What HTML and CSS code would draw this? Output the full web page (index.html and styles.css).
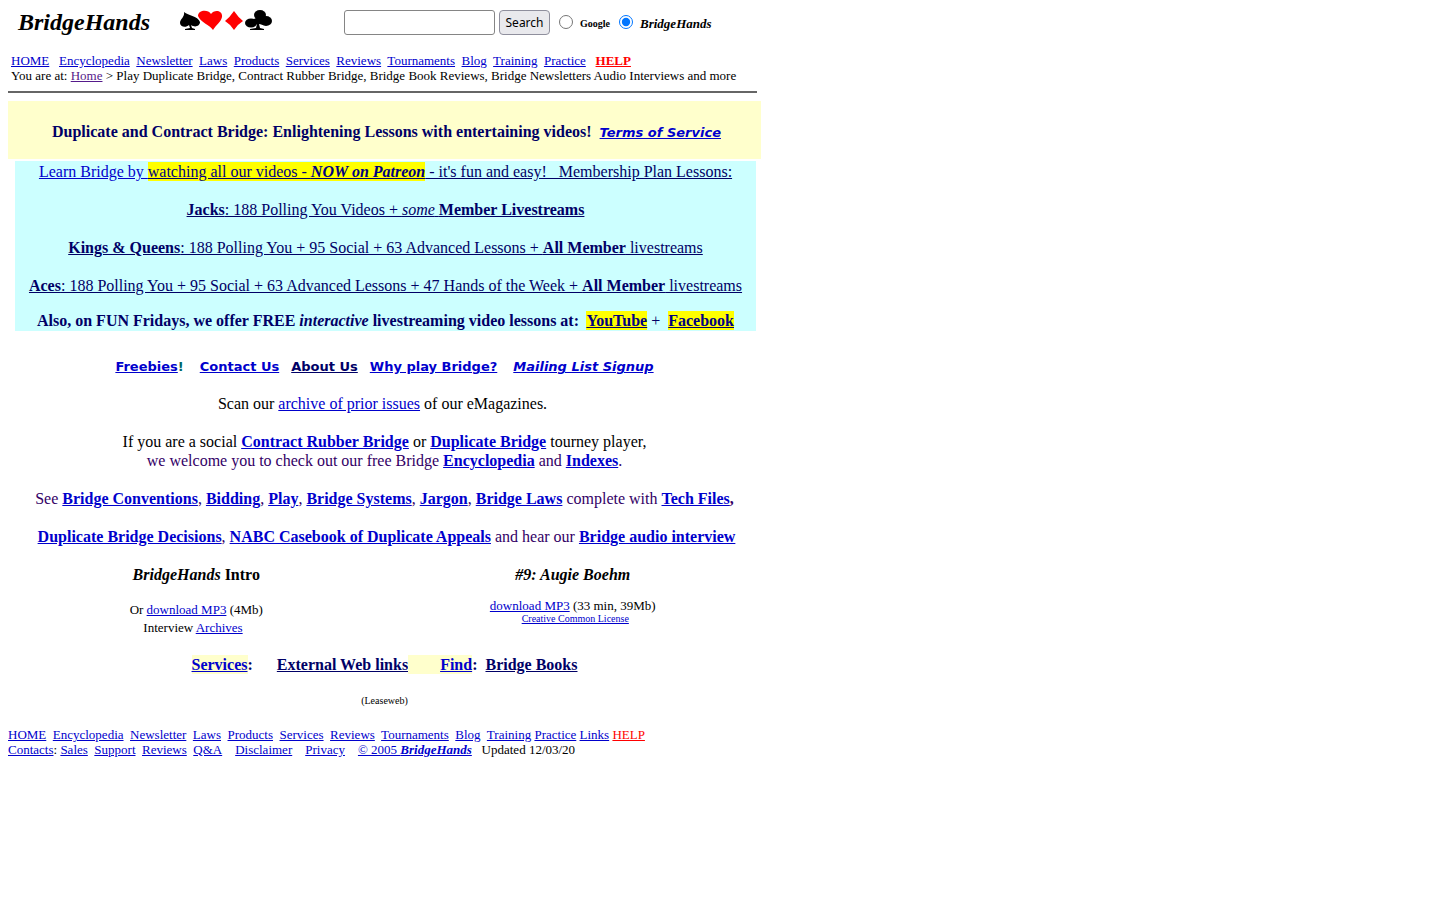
FILE: index.html
```html
<!DOCTYPE html>
<html lang="en">
<head>
	<meta charset="UTF-8">
	<title>BridgeHands</title>
	<link rel="stylesheet" href="styles.css">
</head>
<body>
	<div class="page">
		<header class="top">
			<div class="logo">BridgeHands</div>
			<svg class="suits" viewBox="0 0 92 22" role="img" aria-label="Card suits">
				<path d="M4 2C7 5 18 6 20 12C20 16 15 18 11 15L12 18L15 19V20H5V19L10 18L9 15C6 18 0 17 0 13C0 9 5 7 4 2Z"/>
				<path fill="#f00" d="M33 20C30 15 20 12 18 6C18 0 28 -1 31 4C34 -1 43 0 42 7C41 12 36 15 33 20Z"/>
				<path fill="#f00" d="M54 1Q58 7 63 11Q58 14 54 20Q50 14 45 11Q50 7 54 1Z"/>
				<ellipse cx="80" cy="5" rx="6" ry="5"/>
				<ellipse cx="71" cy="13" rx="6" ry="4.5"/>
				<ellipse cx="86" cy="11" rx="6" ry="5"/>
				<path d="M74 9L76 8L84 8V15L79 14L80 18L84 19V20H70V19L76 18L77 14L72 16Z"/>
			</svg>
			<form class="search">
				<input type="text" class="search-text" aria-label="Search text">
				<button type="button" class="search-btn">Search</button>
				<label class="google"><input type="radio" name="site">Google</label>
				<label class="site"><input type="radio" name="site" checked>BridgeHands</label>
			</form>
		</header>

		<nav class="nav">
			<a href="#">HOME</a>&nbsp;&nbsp; <a href="#">Encyclopedia</a>&nbsp; <a href="#">Newsletter</a>&nbsp; <a href="#">Laws</a>&nbsp; <a href="#">Products</a>&nbsp; <a href="#">Services</a>&nbsp; <a href="#">Reviews</a>&nbsp; <a href="#">Tournaments</a>&nbsp; <a href="#">Blog</a>&nbsp; <a href="#">Training</a>&nbsp; <a href="#">Practice</a>&nbsp;&nbsp; <a href="#" class="help"><b>HELP</b></a><br>
			You are at: <a href="#" class="visited">Home</a> &gt; Play Duplicate Bridge, Contract Rubber Bridge, Bridge Book Reviews, Bridge Newsletters Audio Interviews and more
		</nav>
		<hr>

		<h1 class="banner">&nbsp;Duplicate and Contract Bridge: Enlightening Lessons with entertaining videos!&nbsp; <a href="#" class="sans"><i>Terms of Service</i></a></h1>

		<div class="plans">
			<p><a href="#">Learn Bridge by </a><a href="#" class="navy"><mark>watching all our videos - <b><i>NOW on Patreon</i></b></mark> - it's fun and easy!&nbsp;&nbsp; Membership Plan Lessons:</a></p>
			<p><a href="#" class="navy"><b>Jacks</b>: 188 Polling You Videos + <i>some</i> <b>Member Livestreams</b></a></p>
			<p><a href="#" class="navy"><b>Kings &amp; Queens</b>: 188 Polling You + 95 Social + 63 Advanced Lessons + <b>All Member</b> livestreams</a></p>
			<p><a href="#" class="navy"><b>Aces</b>: 188 Polling You + 95 Social + 63 Advanced Lessons + 47 Hands of the Week + <b>All Member</b> livestreams</a></p>
			<p class="fridays"><b>Also, on FUN Fridays, we offer FREE <i>interactive</i> livestreaming video lessons at:&nbsp; <a href="#" class="navy"><mark>YouTube</mark></a></b> +&nbsp; <b><a href="#" class="navy"><mark>Facebook</mark></a></b></p>
		</div>

		<p class="quick"><a href="#" class="sans">Freebies</a><span class="sans teal">!</span>&nbsp;&nbsp;&nbsp; <a href="#" class="sans">Contact Us</a>&nbsp;&nbsp; <a href="#" class="sans navy">About Us</a>&nbsp;&nbsp; <a href="#" class="sans">Why play Bridge?</a>&nbsp;&nbsp;&nbsp; <a href="#" class="sans"><i>Mailing List Signup</i></a></p>

		<div class="intro">
			<p>Scan our <a href="#">archive of prior issues</a> of our eMagazines.&nbsp;</p>
			<p>If you are a social <b><a href="#">Contract Rubber Bridge</a></b> or <b><a href="#">Duplicate Bridge</a></b> tourney player,<br>
			<span class="purple">we welcome you to check out our free Bridge <b><a href="#">Encyclopedia</a></b> and <b><a href="#">Indexes</a></b>.</span></p>
			<p class="purple">See <b><a href="#">Bridge Conventions</a></b>, <b><a href="#">Bidding</a></b>, <b><a href="#">Play</a></b>, <b><a href="#">Bridge Systems</a></b>, <b><a href="#">Jargon</a></b>, <b><a href="#">Bridge Laws</a></b> complete with <b><a href="#">Tech Files</a>,</b></p>
			<p class="purple">&nbsp;<b><a href="#">Duplicate Bridge Decisions</a></b>, <b><a href="#">NABC Casebook of Duplicate Appeals</a></b> and hear our <b><a href="#">Bridge audio interview</a></b></p>
		</div>

		<div class="audio">
			<div>
				<h2><i>BridgeHands</i> Intro</h2>
				<p class="mp3">Or <a href="#">download MP3</a> (4Mb)<br>Interview <a href="#">Archives</a>&nbsp;&nbsp;</p>
			</div>
			<div>
				<h2><i>#9: Augie Boehm</i></h2>
				<p><a href="#">download MP3</a> (33 min, 39Mb)</p>
				<p class="small">&nbsp;&nbsp;<a href="#">Creative Common License</a></p>
			</div>
		</div>

		<p class="find"><a href="#" class="pale">Services</a>:&nbsp;&nbsp;&nbsp;&nbsp;&nbsp; <a href="#" class="navy">External Web links</a><span class="pale">&nbsp;&nbsp;&nbsp;&nbsp;&nbsp;&nbsp;&nbsp; <a href="#">Find</a></span>:&nbsp; <a href="#" class="navy">Bridge Books</a></p>

		<p class="host small">(Leaseweb)</p>

		<footer>
			<a href="#">HOME</a>&nbsp; <a href="#">Encyclopedia</a>&nbsp; <a href="#">Newsletter</a>&nbsp; <a href="#">Laws</a>&nbsp; <a href="#">Products</a>&nbsp; <a href="#">Services</a>&nbsp; <a href="#">Reviews</a>&nbsp; <a href="#">Tournaments</a>&nbsp; <a href="#">Blog</a>&nbsp; <a href="#">Training</a> <a href="#">Practice</a> <a href="#">Links</a> <a href="#" class="help">HELP</a><br>
			<a href="#">Contacts</a>: <a href="#">Sales</a>&nbsp; <a href="#">Support</a>&nbsp; <a href="#">Reviews</a>&nbsp; <a href="#">Q&amp;A</a>&nbsp;&nbsp;&nbsp; <a href="#">Disclaimer</a>&nbsp;&nbsp;&nbsp; <a href="#">Privacy</a>&nbsp;&nbsp;&nbsp; <a href="#">© 2005 <b><i>BridgeHands</i></b></a>&nbsp;&nbsp; Updated 12/03/20
		</footer>
	</div>
</body>
</html>
```
FILE: styles.css
```css
body{
	margin: 8px;
	background: #fff;
	color: #000;
	font-family: "Liberation Serif","Times New Roman",serif;
	font-size: 13px;
	line-height: 15px;
}
h1,h2,p{
	margin: 0;
	font-size: 16px;
	line-height: 19px;
}
a{
	color: #0000cc;
}
.page{
	max-width: 753px;
}
.sans{
	font-family: "DejaVu Sans",Verdana,sans-serif;
	font-size: 13px;
	font-weight: bold;
}
.navy{
	color: #000066;
}
.purple{
	color: #330066;
}
.teal{
	color: #006666;
}
.help{
	color: #ff0000;
}
.visited{
	color: #551a8b;
}
.pale{
	padding: 1px 0;
	background: #ffffcc;
}
mark{
	padding: 1px 0;
	background: #ffff00;
	color: #000080;
}

/* header */
.top{
	display: flex;
	align-items: center;
	height: 28px;
	padding-left: 10px;
}
.logo{
	font-size: 24px;
	font-weight: bold;
	font-style: italic;
	line-height: 28px;
}
.suits{
	width: 92px;
	height: 22px;
	margin: 0 72px 2px 30px;
}
.search{
	display: flex;
	align-items: center;
}
.search-text{
	box-sizing: border-box;
	width: 151px;
	height: 25px;
	margin: 0 4px 0 0;
	border: 1px solid #858585;
	border-radius: 3px;
}
.search-btn{
	box-sizing: border-box;
	width: 51px;
	height: 25px;
	padding: 0;
	border: 1px solid #8f8f9d;
	border-radius: 4px;
	background: #e9e9ed;
	font-family: "Noto Sans",sans-serif;
	font-size: 12px;
}
.search label{
	display: flex;
	align-items: center;
	margin: 2px 0 0 9px;
	font-weight: bold;
}
.search input[type=radio]{
	width: 14px;
	height: 14px;
	margin: 0 7px 2px 0;
}
.search .google{
	font-size: 10px;
}
.site{
	font-style: italic;
}

.nav{
	margin-top: 17px;
	padding-left: 3px;
}
hr{
	height: 2px;
	margin: 8px 4px 8px 0;
	border: 0;
	background: #666;
}

.banner{
	padding: 22px 0 17px;
	background: #ffffcc;
	color: #000066;
	line-height: 18px;
	text-align: center;
}
.plans{
	margin: 2px 5px 0 7px;
	padding: 1px 0;
	background: #ccffff;
	color: #000066;
	text-align: center;
}
.plans p{
	margin-bottom: 19px;
}
.plans .fridays{
	margin: -3px 0 0;
}
.quick{
	margin-top: 25px;
	text-align: center;
}
.intro{
	margin-top: 18px;
	text-align: center;
}
.intro p{
	margin-bottom: 19px;
}

/* two mp3 columns */
.audio{
	display: grid;
	grid-template-columns: 1fr 1fr;
	text-align: center;
}
.audio h2{
	margin-bottom: 14px;
}
.audio p{
	font-size: 13px;
	line-height: 15px;
}
.audio .mp3{
	margin-top: 17px;
	line-height: 18px;
}
.audio .small, .small{
	font-size: 10px;
	line-height: 12px;
}
.find{
	margin-top: 18px;
	color: #000066;
	font-weight: bold;
	text-align: center;
}
.host{
	margin: 21px 0 20px;
	text-align: center;
}
```
